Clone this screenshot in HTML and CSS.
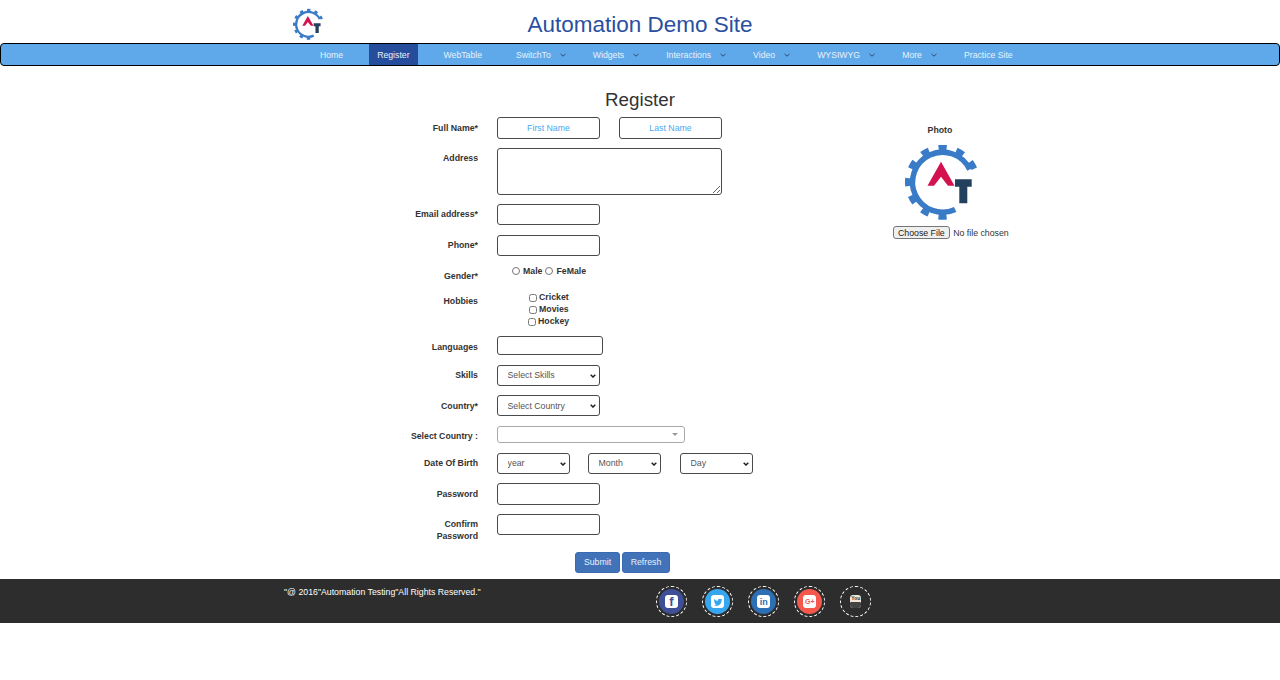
FILE: index.html
```html
<!DOCTYPE html>
<html lang="en">
<head>
    <meta charset="utf-8" />
    <title>Register</title>
    <link rel="stylesheet" href="styles.css">
</head>
<body>

<svg class="defs" width="0" height="0">
    <symbol id="at-logo" viewBox="0 0 75 75">
        <path d="M50.2 64.4A30 30 0 1 1 64.7 24.5" fill="none" stroke="#3a7bc8" stroke-width="5.5" />
        <path d="M49.3 69.6A34.5 34.5 0 1 1 69.9 25.4" fill="none" stroke="#3a7bc8" stroke-width="6" stroke-dasharray="8 10.06" stroke-dashoffset="-8.04" />
        <polygon points="36,16.7 49.5,40.7 43,40.7 36,31.7 29,40.7 22.5,40.7" fill="#d3124f" />
        <polygon points="50,34.3 66.7,34.3 66.7,41.7 62.3,41.7 62.3,58.3 54.3,58.3 54.3,41.7 50,41.7" fill="#24405f" />
    </symbol>
</svg>

<div class="top">
    <svg class="logo-small"><use href="#at-logo" /></svg>
    <h1 class="site-title">Automation Demo Site</h1>
</div>

<ul class="nav">
    <li><a href="#">Home</a></li>
    <li class="active"><a href="#">Register</a></li>
    <li><a href="#">WebTable</a></li>
    <li><a href="#">SwitchTo<svg class="caret" viewBox="0 0 8 8"><path d="M1.5 3l2.5 2.2L6.5 3" /></svg></a></li>
    <li><a href="#">Widgets<svg class="caret" viewBox="0 0 8 8"><path d="M1.5 3l2.5 2.2L6.5 3" /></svg></a></li>
    <li><a href="#">Interactions<svg class="caret" viewBox="0 0 8 8"><path d="M1.5 3l2.5 2.2L6.5 3" /></svg></a></li>
    <li><a href="#">Video<svg class="caret" viewBox="0 0 8 8"><path d="M1.5 3l2.5 2.2L6.5 3" /></svg></a></li>
    <li><a href="#">WYSIWYG<svg class="caret" viewBox="0 0 8 8"><path d="M1.5 3l2.5 2.2L6.5 3" /></svg></a></li>
    <li><a href="#">More<svg class="caret" viewBox="0 0 8 8"><path d="M1.5 3l2.5 2.2L6.5 3" /></svg></a></li>
    <li><a href="#">Practice Site</a></li>
</ul>

<div class="main">
    <form class="reg-form">
        <h2 class="form-title">Register</h2>

        <div class="row gap9">
            <label class="lbl low">Full Name*</label>
            <div class="fields">
                <input class="txt h22" type="text" placeholder="First Name" />
                <input class="txt h22 second" type="text" placeholder="Last Name" />
            </div>
        </div>
        <div class="row gap9">
            <label class="lbl">Address</label>
            <div class="fields"><textarea class="area"></textarea></div>
        </div>
        <div class="row gap10">
            <label class="lbl">Email address*</label>
            <div class="fields"><input class="txt h21" type="email" /></div>
        </div>
        <div class="row gap10">
            <label class="lbl">Phone*</label>
            <div class="fields"><input class="txt h21" type="tel" /></div>
        </div>
        <div class="row gender gap10">
            <label class="lbl">Gender*</label>
            <div class="fields choices-radio">
                <label class="opt"><input type="radio" name="g" /> Male</label>
                <label class="opt"><input type="radio" name="g" /> FeMale</label>
            </div>
        </div>
        <div class="row hobbies gap9">
            <label class="lbl">Hobbies</label>
            <div class="choices-check">
                <label class="opt"><input type="checkbox" /> Cricket</label>
                <label class="opt"><input type="checkbox" /> Movies</label>
                <label class="opt shift"><input type="checkbox" /> Hockey</label>
            </div>
        </div>
        <div class="row gap10">
            <label class="lbl low">Languages</label>
            <div class="fields"><input class="txt lang" type="text" /></div>
        </div>
        <div class="row gap9">
            <label class="lbl">Skills</label>
            <div class="fields"><select class="sel wide"><option>Select Skills</option></select></div>
        </div>
        <div class="row gap10">
            <label class="lbl low">Country*</label>
            <div class="fields"><select class="sel wide sel-low"><option>Select Country</option></select></div>
        </div>
        <div class="row gap10">
            <label class="lbl">Select Country :</label>
            <div class="fields"><div class="combo"><span class="combo-arrow"></span></div></div>
        </div>
        <div class="row gap9">
            <label class="lbl">Date Of Birth</label>
            <div class="fields dob">
                <select class="sel short"><option>year</option></select>
                <select class="sel short"><option>Month</option></select>
                <select class="sel short"><option>Day</option></select>
            </div>
        </div>
        <div class="row gap9">
            <label class="lbl low">Password</label>
            <div class="fields"><input class="txt h22" type="password" /></div>
        </div>
        <div class="row confirm">
            <label class="lbl">Confirm<br />Password</label>
            <div class="fields"><input class="txt h21" type="password" /></div>
        </div>
        <div class="buttons">
            <button class="btn submit" type="button">Submit</button>
            <button class="btn refresh" type="button">Refresh</button>
        </div>
    </form>

    <div class="photo">
        <div class="photo-lbl">Photo</div>
        <svg class="logo-big"><use href="#at-logo" /></svg>
        <input class="file" type="file" />
    </div>
</div>

<div class="footer">
    <div class="copy">"@ 2016"Automation Testing"All Rights Reserved."</div>
    <div class="social">
        <a class="ring" href="#"><span class="disc fb"><span class="sq fb-t">f</span></span></a>
        <a class="ring" href="#"><span class="disc tw"><span class="sq"><svg class="bird" viewBox="0 0 24 24"><path d="M22.46 6c-.77.35-1.6.58-2.46.69.88-.53 1.56-1.37 1.88-2.38-.83.5-1.75.85-2.72 1.05C18.37 4.5 17.26 4 16 4c-2.35 0-4.27 1.92-4.27 4.29 0 .34.04.67.11.98C8.28 9.09 5.11 7.38 3 4.79c-.37.63-.58 1.37-.58 2.15 0 1.49.75 2.81 1.91 3.56-.71 0-1.37-.2-1.95-.5v.03c0 2.08 1.48 3.82 3.44 4.21a4.22 4.22 0 0 1-1.93.07 4.28 4.28 0 0 0 4 2.98 8.521 8.521 0 0 1-5.33 1.84c-.34 0-.68-.02-1.02-.06C3.44 20.29 5.7 21 8.12 21 16 21 20.33 14.46 20.33 8.79c0-.19 0-.37-.01-.56.84-.6 1.56-1.36 2.14-2.23z" /></svg></span></span></a>
        <a class="ring" href="#"><span class="disc li"><span class="sq li-t">in</span></span></a>
        <a class="ring" href="#"><span class="disc gp"><span class="sq gp-t">G+</span></span></a>
        <a class="ring" href="#"><span class="disc yt"><span class="sq yt-t"><span class="yt-you">You</span><span class="yt-tube"></span></span></span></a>
    </div>
</div>

</body>
</html>
```

FILE: styles.css
```css
* { box-sizing: border-box; }
body { margin: 0; background: #fff; color: #333; font-family: "Liberation Sans", Arial, sans-serif; font-size: 8.75px; }
.defs { position: absolute; }

/* header */
.top { display: flex; align-items: center; height: 43px; padding-left: 293px; }
.logo-small { width: 31px; height: 33px; margin-top: 6px; flex: none; }
.site-title { margin: 6px 0 0 203.5px; font-size: 22.5px; font-weight: normal; color: #2a4f9f; }

/* nav */
.nav { display: flex; gap: 18px; height: 23px; margin: 0; padding: 0 0 0 311px; list-style: none; background: #5fa9ea; border: 1px solid #000; border-radius: 4px; font-size: 8.7px; }
.nav li { display: flex; align-items: center; padding: 0 8px; }
.nav a { display: flex; align-items: center; color: #e8f2fb; text-decoration: none; }
.nav .active { background: #264d9b; }
.caret { width: 8px; height: 8px; margin: 0 -8px 0 8px; fill: none; stroke: #2d4a6e; stroke-width: 1; }

/* form */
.main { display: flex; padding: 23px 0 0 400px; }
.reg-form { width: 480px; }
.form-title { margin: 0 0 6px; font-size: 18.8px; line-height: 22px; font-weight: normal; text-align: center; }
.row { display: flex; }
.gap9 { margin-bottom: 9px; }
.gap10 { margin-bottom: 10px; }
.lbl { width: 78px; padding-top: 4px; line-height: 12px; font-weight: bold; text-align: right; flex: none; }
.low { padding-top: 5px; }
.fields { display: flex; margin-left: 19px; }
.txt, .area, .sel { border: 1px solid #4a4a4a; border-radius: 3px; background-color: #fff; font-family: inherit; font-size: 8.75px; outline: none; }
.txt { display: block; width: 103px; padding: 0; text-align: center; }
.txt::placeholder { color: #4aa8f0; opacity: 1; }
.h22 { height: 22px; }
.h21 { height: 21px; }
.second { margin-left: 19px; }
.lang { width: 106px; height: 19px; }
.area { display: block; width: 225px; height: 47px; }
.sel { height: 21px; padding: 0 0 1px 9.5px; color: #555; appearance: none; background-image: url("data:image/svg+xml,%3Csvg xmlns='http://www.w3.org/2000/svg' width='6' height='4'%3E%3Cpath d='M.7.7L3 3l2.3-2.3' fill='none' stroke='%23222' stroke-width='1.5'/%3E%3C/svg%3E"); background-repeat: no-repeat; background-position: right 3px center; }
.sel-low { padding-bottom: 0; }
.wide { width: 103px; }
.short { width: 73px; }
.dob { gap: 18px; }
.dob .short + .short + .short { margin-left: 1px; }

.combo { position: relative; width: 188px; height: 17px; border: 1px solid #aaa; border-radius: 3px; }
.combo-arrow { position: absolute; top: 6px; right: 6px; border: 3px solid transparent; border-top-color: #999; border-bottom: 0; }

.gender { height: 15px; }
.choices-radio { margin-left: 34px; height: 9px; align-items: center; }
.opt { display: flex; align-items: center; gap: 3px; font-weight: bold; line-height: 12px; }
.choices-radio .opt + .opt { margin-left: 3px; }
.opt input { width: 8px; height: 8px; margin: 1px 0 0; flex: none; }
.hobbies { height: 36px; }
.choices-check { margin-left: 51px; }
.choices-check .opt { gap: 2px; }
.shift { margin-left: -1px; }
.confirm { height: 38px; }

.buttons { display: flex; gap: 2px; margin-left: 175px; }
.btn { height: 21px; padding: 0 0 2px; border: 1px solid #3a6ab0; border-radius: 3px; background: #4272b8; color: #e8f0fa; font-family: inherit; font-size: 8.75px; }
.submit { width: 45px; }
.refresh { width: 48px; }

/* photo */
.photo { display: flex; flex-direction: column; align-items: center; width: 120px; padding-top: 36px; }
.photo-lbl { font-weight: bold; line-height: 10px; }
.logo-big { width: 75px; height: 75px; margin: 10px 0 0 4px; }
.file { align-self: flex-start; width: 118px; margin: 6px 0 0 13px; font-family: inherit; font-size: 8.75px; color: #333; }
.file::file-selector-button { height: 13px; padding: 0 4px; margin-right: 3.5px; border: 1px solid #767676; border-radius: 3px; background: #efefef; color: #222; font-family: inherit; font-size: 8.75px; }

/* footer */
.footer { display: flex; height: 44px; margin-top: 6px; padding-left: 284px; background: #2d2d2d; color: #fff; }
.copy { width: 372px; padding-top: 7px; line-height: 12px; }
.social { display: flex; gap: 15.1px; padding-top: 7px; }
.ring { display: flex; align-items: center; justify-content: center; width: 31px; height: 31px; border: 1px dashed #fff; border-radius: 50%; text-decoration: none; }
.disc { display: flex; align-items: center; justify-content: center; width: 25px; height: 25px; border-radius: 50%; }
.fb { background: #3f4f97; }
.tw { background: #38a6ef; }
.li { background: #2c6fb4; }
.gp { background: #f4574b; }
.yt { background: transparent; }
.sq { display: flex; align-items: center; justify-content: center; width: 13px; height: 13px; border-radius: 3px; background: #fff; font-weight: bold; overflow: hidden; }
.fb-t { align-items: flex-end; color: #3f4f97; font-size: 13px; line-height: 12px; }
.bird { width: 10px; height: 10px; fill: #38a6ef; }
.li-t { color: #2c6fb4; font-size: 9px; }
.gp-t { color: #f4574b; font-size: 7px; background: #fff; }
.yt-t { flex-direction: column; width: 11px; background: #f3e6d6; }
.yt-you { color: #333; font-size: 5px; line-height: 5px; }
.yt-tube { width: 11px; height: 6px; margin-top: 1px; background: #444; border-radius: 1px; }
```
